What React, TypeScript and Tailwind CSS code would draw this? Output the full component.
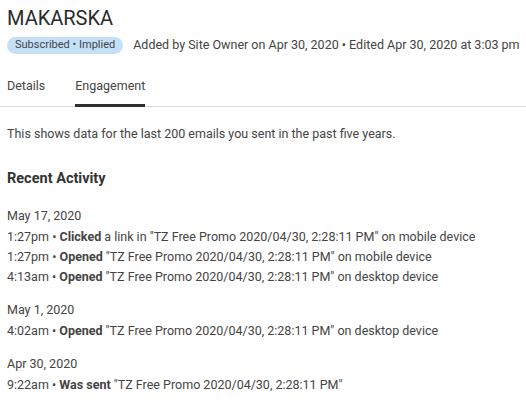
import React from "react";

type Item = { time: string; action: string; rest: string };

const groups: { date: string; items: Item[] }[] = [
    {
        date: "May 17, 2020",
        items: [
            { time: "1:27pm", action: "Clicked", rest: ' a link in "TZ Free Promo 2020/04/30, 2:28:11 PM" on mobile device' },
            { time: "1:27pm", action: "Opened", rest: ' "TZ Free Promo 2020/04/30, 2:28:11 PM" on mobile device' },
            { time: "4:13am", action: "Opened", rest: ' "TZ Free Promo 2020/04/30, 2:28:11 PM" on desktop device' },
        ],
    },
    {
        date: "May 1, 2020",
        items: [{ time: "4:02am", action: "Opened", rest: ' "TZ Free Promo 2020/04/30, 2:28:11 PM" on desktop device' }],
    },
    {
        date: "Apr 30, 2020",
        items: [{ time: "9:22am", action: "Was sent", rest: ' "TZ Free Promo 2020/04/30, 2:28:11 PM"' }],
    },
];

export default function App() {
    return (
        <div className="w-[526px] h-[407px] overflow-hidden bg-white text-[#333] font-['Roboto',sans-serif]">
            <div className="px-[7px] pt-[5px]">
                <h1 className="text-[20px] leading-[26px] text-[#2b2b2b]">MAKARSKA</h1>
                <div className="flex items-center gap-[10px] mt-[5px] whitespace-nowrap">
                    <span className="rounded-full bg-[#c4e0f8] px-[8px] h-[17px] flex items-center text-[11px] text-[#444]">
                        Subscribed • Implied
                    </span>
                    <span className="text-[12.5px] text-[#444]">
                        Added by Site Owner on Apr 30, 2020 • Edited Apr 30, 2020 at 3:03 pm
                    </span>
                </div>
            </div>

            <div className="mt-[22px] flex gap-[30px] px-[7px] border-b border-[#d9d9d9] text-[12.5px] text-[#444] leading-[18px]">
                <div className="pb-[11px]">Details</div>
                <div className="pb-[8px] border-b-[3px] border-[#2f2f2f] -mb-px">Engagement</div>
            </div>

            <div className="px-[7px]">
                <p className="mt-[18px] text-[12.5px] leading-[18px] text-[#444] whitespace-nowrap">
                    This shows data for the last 200 emails you sent in the past five years.
                </p>
                <h2 className="mt-[26px] text-[14.5px] leading-[20px] font-bold text-[#333]">Recent Activity</h2>

                <div className="mt-[17px] flex flex-col gap-[13px] text-[12.5px] text-[#444]">
                    {groups.map((g) => (
                        <div key={g.date} className="leading-[20px]">
                            <div className="mb-[1px]">{g.date}</div>
                            {g.items.map((it, i) => (
                                <div key={i} className="whitespace-nowrap">
                                    {it.time} • <b className="font-bold">{it.action}</b>
                                    {it.rest}
                                </div>
                            ))}
                        </div>
                    ))}
                </div>
            </div>
        </div>
    );
}
